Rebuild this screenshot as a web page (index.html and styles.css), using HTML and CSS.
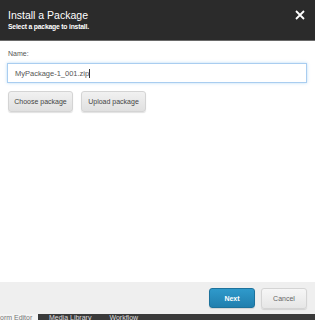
FILE: index.html
```html
<!DOCTYPE html>
<html>
<head>
<meta charset="utf-8">
<link rel="stylesheet" href="styles.css">
</head>
<body>
<div class="dialog">
  <div class="header">
    <div class="titles">
      <div class="title">Install a Package</div>
      <div class="subtitle">Select a package to install.</div>
    </div>
    <svg class="close" width="10" height="10" viewBox="0 0 10 10"><path d="M1 1L9 9M9 1L1 9" stroke="#fff" stroke-width="1.8"/></svg>
  </div>
  <div class="body">
    <label class="label">Name:</label>
    <div class="input">MyPackage-1_001.zip<span class="caret"></span></div>
    <div class="actions">
      <button class="btn">Choose package</button>
      <button class="btn">Upload package</button>
    </div>
  </div>
  <div class="footer">
    <button class="btn primary">Next</button>
    <button class="btn cancel">Cancel</button>
  </div>
  <div class="tabs">
    <span class="tab active">orm Editor</span>
    <span class="tab">Media Library</span>
    <span class="tab">Workflow</span>
  </div>
</div>
</body>
</html>
```
FILE: styles.css
```css
* { box-sizing: border-box; }
html, body { margin: 0; padding: 0; }
body { font-family: "Liberation Sans", Arial, sans-serif; background: #fff; width: 315px; height: 320px; overflow: hidden; }
.dialog { display: flex; flex-direction: column; height: 320px; }
.header { background: #2b2b2b; height: 41px; border-bottom: 1px solid #6a6a6a; display: flex; justify-content: space-between; align-items: flex-start; padding: 9px 10px 0 8px; color: #fff; }
.title { font-size: 10.5px; line-height: 12px; }
.subtitle { font-size: 6.8px; font-weight: bold; margin-top: 2px; letter-spacing: -0.2px; }
.close { margin-top: 1px; }
.body { flex: 1; padding: 9px 8px 0 7px; }
.label { display: block; font-size: 7px; line-height: 8px; color: #555; margin: 0 0 5px 1px; }
.input { height: 20px; border: 1px solid #a9cdf0; box-shadow: 0 0 3px rgba(102,175,233,0.45); font-size: 7.5px; color: #555; padding: 5px 7px; line-height: 9px; }
.caret { display: inline-block; width: 1px; height: 9px; background: #333; vertical-align: -2px; }
.actions { display: flex; gap: 8px; margin-top: 8px; padding-left: 1px; }
.btn { font-family: "Liberation Sans", Arial, sans-serif; font-size: 7px; color: #444; background: linear-gradient(#f1f1f1, #e0e0e0); border: 1px solid #d4d4d4; border-radius: 3px; height: 21px; width: 65px; padding: 0; box-shadow: 0 1px 1px rgba(0,0,0,0.12); }
.footer { background: #efefef; height: 32px; display: flex; justify-content: flex-end; gap: 6px; padding: 6px 8px 0 0; }
.btn.primary { background: linear-gradient(#2f9acb, #217fae); border-color: #1d729c; color: #fff; font-weight: bold; width: 46px; height: 20px; }
.btn.cancel { width: 46px; color: #666; background: linear-gradient(#f6f6f6, #e6e6e6); }
.tabs { background: #3a3a3a; height: 6px; display: flex; overflow: hidden; font-size: 7px; line-height: 7px; color: #ddd; }
.tab { padding: 0 6px; white-space: nowrap; }
.tab.active { background: #f4f4f4; color: #777; width: 38px; padding: 0; margin-right: 5px; }
.tab + .tab { margin-right: 6px; }
```
